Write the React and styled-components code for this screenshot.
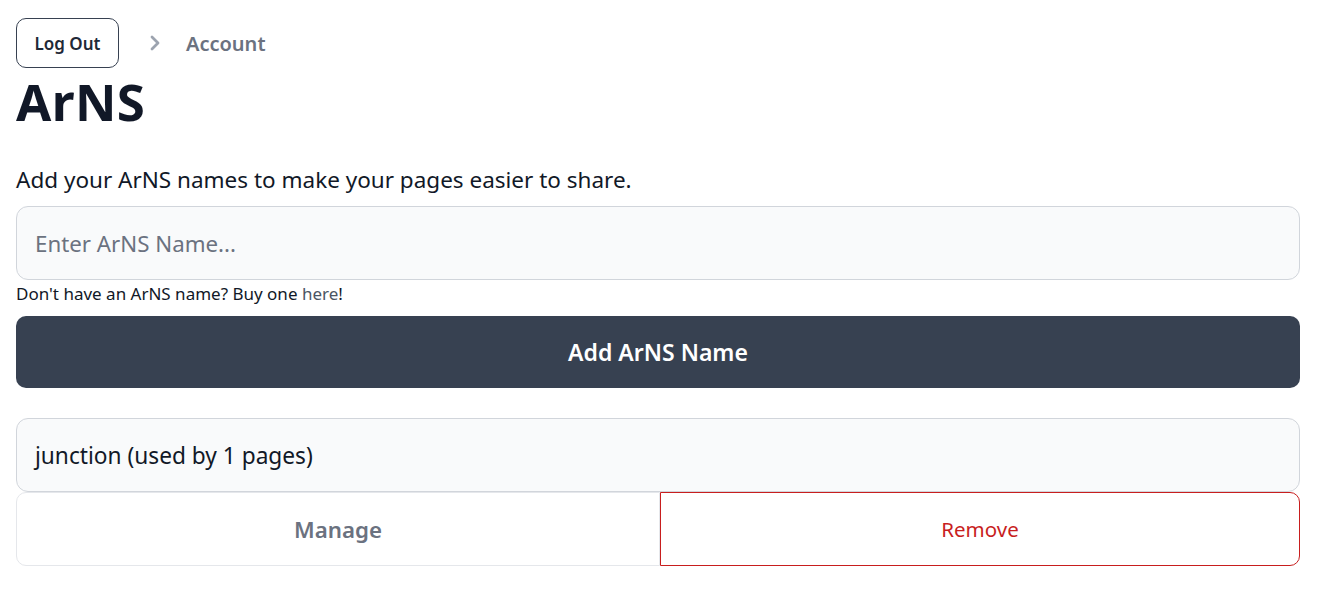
import React, { useState } from 'react';
import styled, { createGlobalStyle } from 'styled-components';

const GlobalStyle = createGlobalStyle`
  * { box-sizing: border-box; }
  body {
    margin: 0;
    background: #ffffff;
    font-family: "Noto Sans", "Open Sans", sans-serif;
    color: #111827;
  }
`;

const Page = styled.main`
  padding: 18px 33px 24px 16px;
`;

const Breadcrumb = styled.nav`
  display: flex;
  align-items: center;
  gap: 29px;
`;

const OutlineButton = styled.button`
  font-family: inherit;
  font-size: 17px;
  font-weight: 600;
  color: #1f2937;
  background: #fff;
  border: 1px solid #374151;
  border-radius: 10px;
  height: 50px;
  width: 103px;
  padding: 0;
  cursor: pointer;
`;

const Crumb = styled.span`
  display: flex;
  align-items: center;
  gap: 24px;
  font-size: 20px;
  font-weight: 600;
  color: #6b7280;
`;

const Title = styled.h1`
  margin: 2px 0 0;
  font-size: 51px;
  line-height: 62px;
  font-weight: 700;
  letter-spacing: 0.4px;
  color: #111827;
`;

const Lead = styled.p`
  margin: 34px 0 12px;
  font-size: 22.5px;
  line-height: 28px;
  color: #111827;
`;

const NameInput = styled.input`
  display: block;
  width: 100%;
  height: 74px;
  padding: 0 18px;
  font-family: inherit;
  font-size: 22.3px;
  color: #111827;
  background: #f9fafb;
  border: 1px solid #d1d5db;
  border-radius: 12px;
  outline: none;
  &::placeholder { color: #6b7280; }
`;

const Hint = styled.p`
  margin: 3px 0 12px;
  font-size: 17px;
  line-height: 21px;
  color: #111827;
  a { color: #4b5563; text-decoration: none; }
`;

const PrimaryButton = styled.button`
  display: block;
  width: 100%;
  height: 72px;
  font-family: inherit;
  font-size: 23px;
  font-weight: 600;
  color: #fff;
  background: #374151;
  border: none;
  border-radius: 10px;
  cursor: pointer;
`;

const NameList = styled.ul`
  list-style: none;
  margin: 30px 0 0;
  padding: 0;
`;

const NameCard = styled.li`
  display: flex;
  flex-direction: column;
`;

const NameLabel = styled.div`
  height: 74px;
  display: flex;
  align-items: center;
  padding: 0 18px;
  font-size: 22.7px;
  color: #111827;
  background: #f9fafb;
  border: 1px solid #d1d5db;
  border-radius: 12px;
`;

const Actions = styled.div`
  display: grid;
  grid-template-columns: 644fr 640fr;
`;

const ActionButton = styled.button`
  height: 74px;
  font-family: inherit;
  font-size: ${p => (p.$danger ? '20.5px' : '22.3px')};
  font-weight: ${p => (p.$danger ? 400 : 600)};
  color: ${p => (p.$danger ? '#c81e1e' : '#6b7280')};
  background: #fff;
  border: 1px solid ${p => (p.$danger ? '#c81e1e' : '#e5e7eb')};
  border-radius: ${p => (p.$danger ? '0 10px 10px 0' : '10px 0 0 10px')};
  cursor: pointer;
`;

const Chevron = () => (
  <svg width="14" height="18" viewBox="0 0 14 18" fill="none">
    <path d="M4 3l6 6-6 6" stroke="#9ca3af" strokeWidth="2.8" strokeLinecap="round" strokeLinejoin="round" />
  </svg>
);

const App = () => {
  const [name, setName] = useState('');
  const names = [{ name: 'junction', pages: 1 }];

  return (
    <Page>
      <GlobalStyle />
      <Breadcrumb>
        <OutlineButton>Log Out</OutlineButton>
        <Crumb>
          <Chevron />
          Account
        </Crumb>
      </Breadcrumb>
      <Title>ArNS</Title>
      <Lead>Add your ArNS names to make your pages easier to share.</Lead>
      <NameInput
        placeholder="Enter ArNS Name..."
        value={name}
        onChange={e => setName(e.target.value)}
      />
      <Hint>Don't have an ArNS name? Buy one <a href="#">here</a>!</Hint>
      <PrimaryButton>Add ArNS Name</PrimaryButton>
      <NameList>
        {names.map(n => (
          <NameCard key={n.name}>
            <NameLabel>{n.name} (used by {n.pages} pages)</NameLabel>
            <Actions>
              <ActionButton>Manage</ActionButton>
              <ActionButton $danger>Remove</ActionButton>
            </Actions>
          </NameCard>
        ))}
      </NameList>
    </Page>
  );
};

export default App;
